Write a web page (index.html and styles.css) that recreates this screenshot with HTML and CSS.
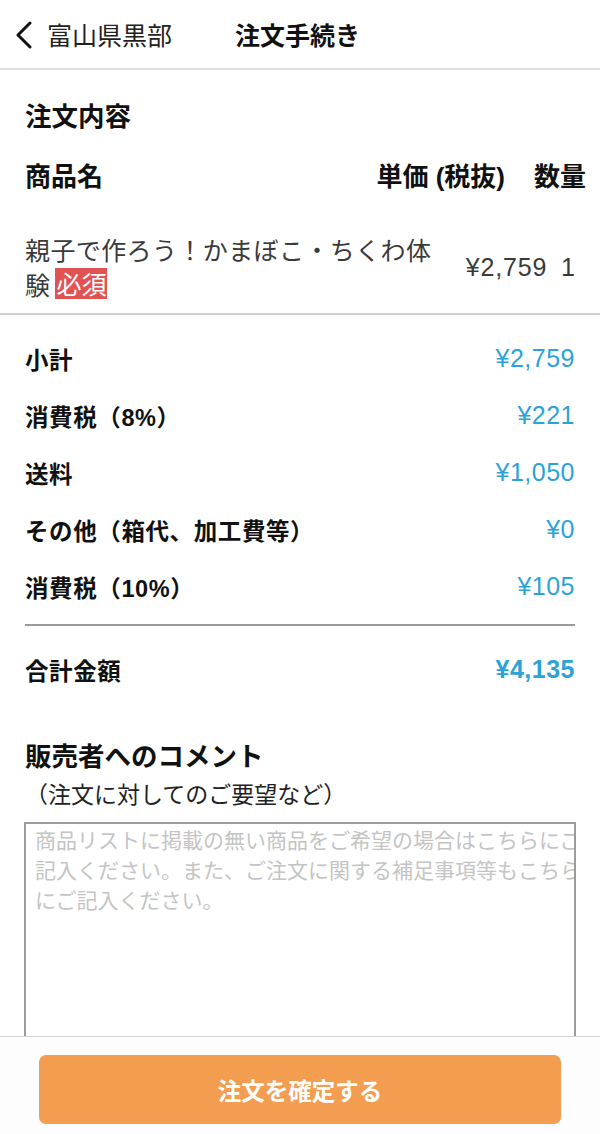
FILE: index.html
```html
<!DOCTYPE html>
<html lang="ja">
<head>
<meta charset="utf-8">
<title>注文手続き</title>
<link rel="stylesheet" href="styles.css">
</head>
<body>
<header class="header">
  <svg class="back-icon" width="20" height="28" viewBox="0 0 20 28" aria-hidden="true">
    <polyline points="16,2 4,14 16,26" fill="none" stroke="#111" stroke-width="3" stroke-linecap="round" stroke-linejoin="round"/>
  </svg>
  <span class="back-label">富山県黒部</span>
  <span class="title">注文手続き</span>
</header>

<main class="content">
  <h2 class="section-title">注文内容</h2>

  <div class="table-head">
    <span class="col-name">商品名</span>
    <span class="col-price">単価 (税抜)</span>
    <span class="col-qty">数量</span>
  </div>

  <div class="item-row">
    <p class="item-name">親子で作ろう！かまぼこ・ちくわ体験<span class="badge">必須</span></p>
    <span class="item-price">¥2,759</span>
    <span class="item-qty">1</span>
  </div>
</main>

<div class="divider-full"></div>

<section class="content summary">
  <div class="sum-row"><span class="sum-label">小計</span><span class="sum-value">¥2,759</span></div>
  <div class="sum-row"><span class="sum-label">消費税（8%）</span><span class="sum-value">¥221</span></div>
  <div class="sum-row"><span class="sum-label">送料</span><span class="sum-value">¥1,050</span></div>
  <div class="sum-row"><span class="sum-label">その他（箱代、加工費等）</span><span class="sum-value">¥0</span></div>
  <div class="sum-row"><span class="sum-label">消費税（10%）</span><span class="sum-value">¥105</span></div>
  <div class="divider-inner"></div>
  <div class="sum-row total"><span class="sum-label">合計金額</span><span class="sum-value">¥4,135</span></div>

  <h2 class="comment-title">販売者へのコメント</h2>
  <p class="comment-sub">（注文に対してのご要望など）</p>
  <div class="comment-box">
    <textarea class="comment-input" placeholder="商品リストに掲載の無い商品をご希望の場合はこちらにご記入ください。また、ご注文に関する補足事項等もこちらにご記入ください。"></textarea>
  </div>
</section>

<footer class="footer">
  <button class="confirm-btn" type="button">注文を確定する</button>
</footer>
</body>
</html>
```

FILE: styles.css
```css
html, body {
  margin: 0;
  padding: 0;
  background: #fff;
}

body {
  font-family: "Liberation Sans", "Noto Sans CJK JP", sans-serif;
  color: #222;
  width: 600px;
  text-spacing-trim: space-all;
  font-feature-settings: "chws" 0, "halt" 0;
}

.header {
  height: 68px;
  display: flex;
  align-items: center;
  padding-left: 14px;
  border-bottom: 2px solid #dedede;
}

.back-icon {
  display: block;
  margin-top: 1px;
}

.back-label {
  margin-left: 13px;
  font-size: 25px;
  color: #222;
  font-family: "Noto Sans CJK JP", sans-serif;
}

.title {
  margin-left: 63px;
  font-size: 25px;
  font-weight: bold;
  color: #111;
  font-family: "Noto Sans CJK JP", sans-serif;
}

.content {
  padding: 0 25px;
}

.section-title {
  margin: 30px 0 0;
  font-size: 26.5px;
  line-height: 34px;
  font-weight: bold;
  color: #111;
}

.table-head {
  display: flex;
  align-items: center;
  margin: 26px -11px 0 0;
  font-size: 26px;
  line-height: 34px;
  font-weight: bold;
  color: #111;
}

.col-name {
  flex: 1;
}

.col-price {
  margin-right: 29px;
}

.item-row {
  display: flex;
  align-items: center;
  margin-top: 38px;
  padding-bottom: 11px;
}

.item-name {
  margin: 0;
  width: 420px;
  font-size: 25px;
  letter-spacing: 0.4px;
  line-height: 35px;
  color: #3a3a3a;
  font-family: "Noto Sans CJK JP", sans-serif;
}

.badge {
  display: inline-block;
  margin-left: 5px;
  background: #e25252;
  color: #fff;
  line-height: 31px;
  padding: 0 1px;
  letter-spacing: 0;
  vertical-align: 1px;
}

.item-price {
  margin-left: auto;
  font-size: 25px;
  letter-spacing: 0.8px;
  color: #3a3a3a;
}

.item-qty {
  margin-left: 14px;
  font-size: 25px;
  color: #3a3a3a;
}

.divider-full {
  height: 2px;
  background: #cfcfcf;
}

.summary {
  padding-top: 15px;
}

.sum-row {
  display: flex;
  align-items: center;
  justify-content: space-between;
  height: 57px;
}

.sum-label {
  font-size: 23.5px;
  font-weight: bold;
  letter-spacing: 0.6px;
  color: #111;
}

.sum-value {
  font-size: 25px;
  letter-spacing: 0.5px;
  color: #2ba3d8;
}

.total {
  margin-top: 15px;
}

.total .sum-value {
  font-weight: bold;
}

.divider-inner {
  height: 2px;
  background: #9a9a9a;
  margin-top: 9px;
}

.comment-title {
  margin: 39px 0 0;
  font-size: 26.5px;
  line-height: 36px;
  font-weight: bold;
  color: #111;
  font-family: "Noto Sans CJK JP", sans-serif;
}

.comment-sub {
  margin: 3px 0 0;
  font-size: 23px;
  line-height: 34px;
  color: #222;
  font-family: "Noto Sans CJK JP", sans-serif;
}

.comment-box {
  box-sizing: border-box;
  width: 552px;
  height: 290px;
  margin: 12px 0 0 -1px;
  border: 2px solid #9c9c9c;
  overflow: hidden;
  background: #fff;
}

.comment-input {
  display: block;
  box-sizing: border-box;
  width: 566px;
  height: 100%;
  margin: 0;
  padding: 0 0 0 9px;
  border: none;
  outline: none;
  resize: none;
  overflow: hidden;
  font-family: "Noto Sans CJK JP", sans-serif;
  font-size: 21px;
  line-height: 30px;
  color: #333;
  background: transparent;
}

.comment-input::placeholder {
  color: #c4c4c4;
}

.footer {
  position: fixed;
  left: 0;
  right: 0;
  bottom: 0;
  height: 98px;
  box-sizing: border-box;
  border-top: 1px solid #d4d4d4;
  background: #fdfdfd;
  padding: 18px 39px 0;
}

.confirm-btn {
  display: block;
  width: 100%;
  height: 69px;
  border: none;
  border-radius: 7px;
  background: #f39d50;
  color: #fff;
  font-family: "Noto Sans CJK JP", sans-serif;
  font-size: 23.5px;
  font-weight: bold;
}
```
